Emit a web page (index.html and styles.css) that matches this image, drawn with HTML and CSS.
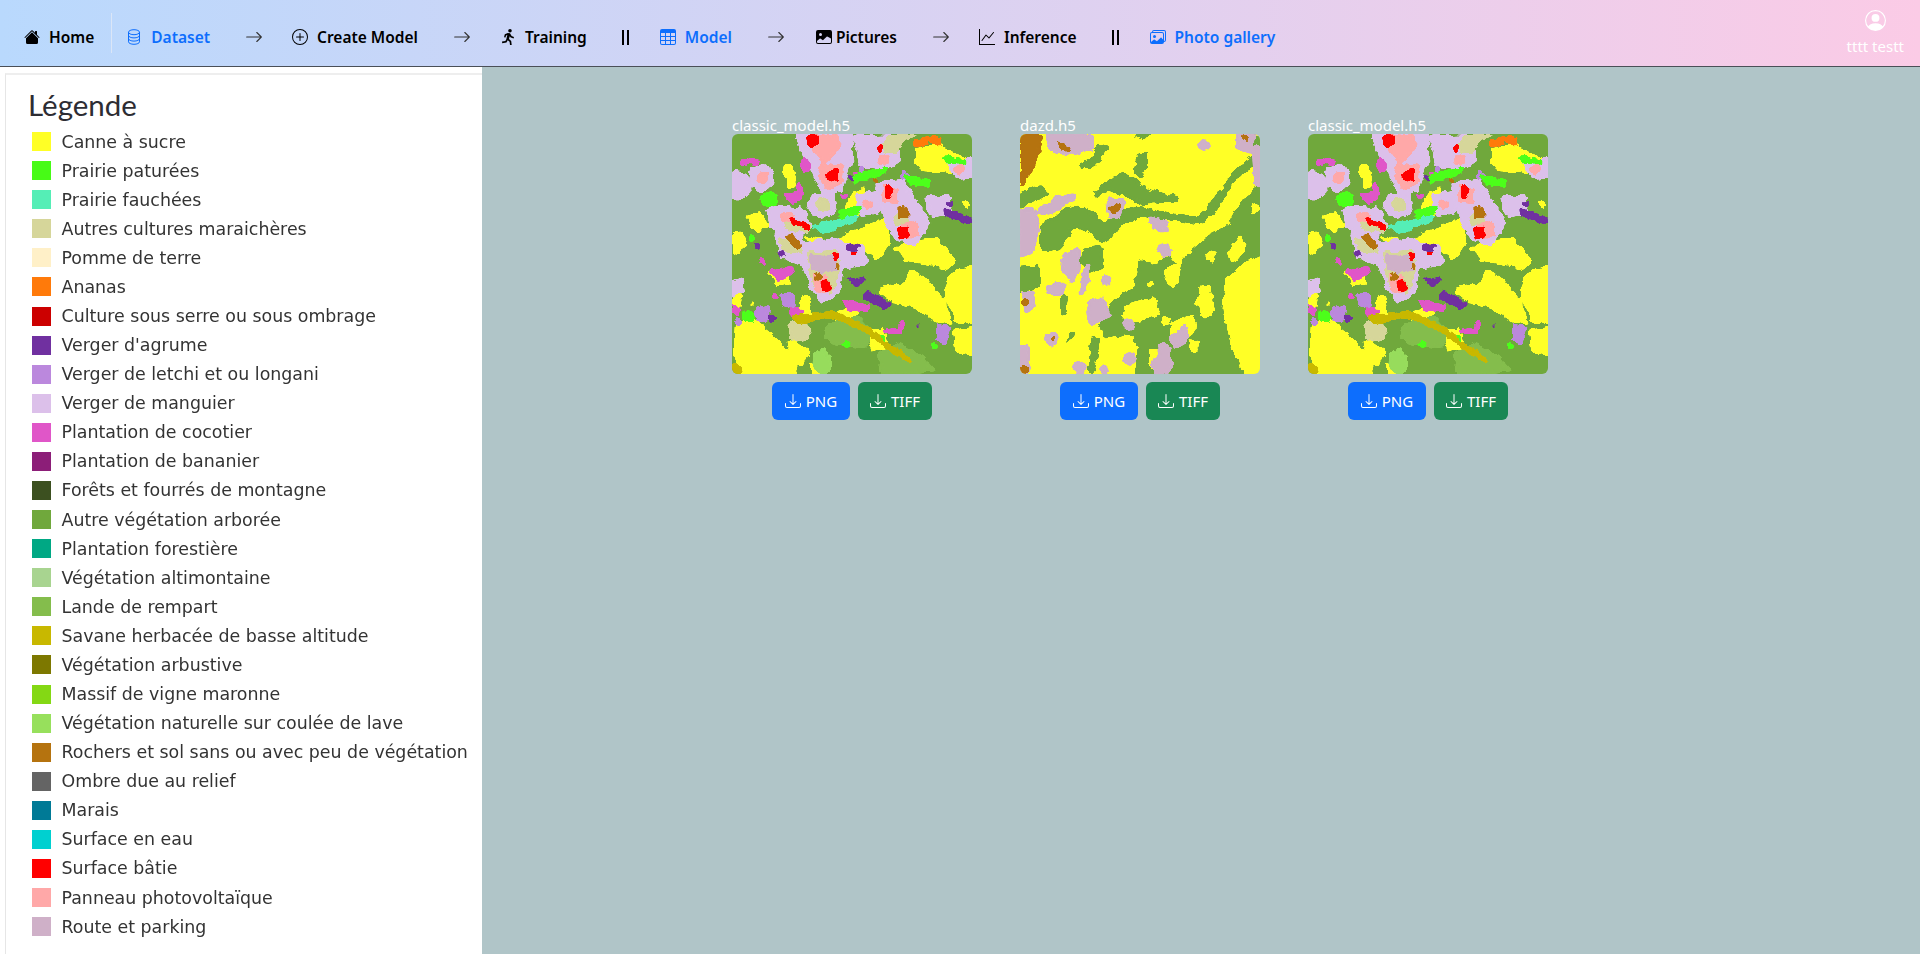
FILE: index.html
```html
<!DOCTYPE html>
<html lang="en">
<head>
    <meta charset="UTF-8">
    <meta name="viewport" content="width=device-width, initial-scale=1.0">
    <title>Photo gallery</title>
    <link rel="stylesheet" href="styles.css">
</head>
<body>
    <svg class="defs" width="0" height="0">
        <defs>
            <filter id="rough" x="-10%" y="-10%" width="120%" height="120%" color-interpolation-filters="sRGB">
                <feGaussianBlur in="SourceGraphic" stdDeviation="1.6" result="soft"/>
                <feColorMatrix in="soft" type="matrix" values="1 0 0 0 0  0 1 0 0 0  0 0 1 0 0  0 0 0 16 -6" result="blob"/>
                <feTurbulence type="fractalNoise" baseFrequency="0.12" numOctaves="2" seed="4" result="noise"/>
                <feDisplacementMap in="blob" in2="noise" scale="7" xChannelSelector="R" yChannelSelector="G"/>
            </filter>
            <symbol id="download" viewBox="0 0 16 16">
                <path d="M.5 9.9a.5.5 0 0 1 .5.5v2.5a1 1 0 0 0 1 1h12a1 1 0 0 0 1-1v-2.5a.5.5 0 0 1 1 0v2.5a2 2 0 0 1-2 2H2a2 2 0 0 1-2-2v-2.5a.5.5 0 0 1 .5-.5z"/>
                <path d="M7.646 11.854a.5.5 0 0 0 .708 0l3-3a.5.5 0 0 0-.708-.708L8.5 10.293V1.5a.5.5 0 0 0-1 0v8.793L5.354 8.146a.5.5 0 1 0-.708.708l3 3z"/>
            </symbol>
            <symbol id="arrow" viewBox="0 0 16 16">
                <path fill-rule="evenodd" d="M1 8a.5.5 0 0 1 .5-.5h11.793l-3.147-3.146a.5.5 0 0 1 .708-.708l4 4a.5.5 0 0 1 0 .708l-4 4a.5.5 0 0 1-.708-.708L13.293 8.5H1.5A.5.5 0 0 1 1 8z"/>
            </symbol>
            <symbol id="map-classic" viewBox="0 0 240 240">
                <rect width="240" height="240" fill="#70a83c"/>
                <g filter="url(#rough)" fill="#ffff26">
                    <path d="M183 15 L205 8 L222 20 L242 28 V42 L215 38 L190 37 L183 28Z"/>
                    <path d="M3 190 L20 183 L40 200 L62 222 L66 242 H8 L2 220Z"/>
                    <path d="M161 113 L190 106 L205 105 L225 125 L215 135 L195 130 L175 128Z"/>
                    <path d="M147 152 L170 150 L180 135 L195 145 L212 165 L220 190 L205 188 L185 175 L165 170 L147 160Z"/>
                    <path d="M218 140 L242 130 V190 L224 188 L212 160Z"/>
                    <path d="M68 102 L100 106 L128 94 L155 83 L158 108 L145 126 L130 114 L100 110 L80 108Z"/>
                    <path d="M221 196 L242 193 V222 L224 220Z"/>
                    <path d="M15 82 L28 78 L38 92 L24 98 L18 92Z"/>
                    <path d="M135 198 L152 194 L156 214 L140 218Z"/>
                    <path d="M78 226 L92 232 L90 242 H78Z"/>
                    <path d="M52 32 L60 30 L64 52 L55 54Z"/>
                    <path d="M0 100 L10 96 L14 112 L2 122Z"/>
                    <path d="M36 136 L55 140 L60 150 L46 152Z"/>
                    <path d="M68 165 L78 160 L80 182 L70 188Z"/>
                    <path d="M0 158 L10 160 L8 176 L0 172Z"/>
                    <path d="M118 62 L134 52 L125 85 L100 95 L112 78Z"/>
                    <path d="M100 178 L130 172 L120 192 L105 190Z"/>
                    <path d="M55 205 L78 215 L70 232 L60 225Z"/>
                    <circle cx="158" cy="6" r="4"/><circle cx="235" cy="70" r="4"/><circle cx="20" cy="170" r="2"/>
                </g>
                <g filter="url(#rough)" fill="#84bd4c">
                    <path d="M96 190 L125 182 L138 196 L135 214 L105 212 L92 205Z"/>
                    <path d="M145 220 L165 208 L190 222 L205 238 L150 242Z"/>
                </g>
                <path filter="url(#rough)" d="M82 218 L92 214 L102 230 L90 242 L80 234Z" fill="#97dc5c"/>
                <g filter="url(#rough)" fill="#dcc0ea" stroke="#dcc0ea" stroke-width="5" stroke-linejoin="round">
                    <path d="M66 0 L118 0 L118 25 L108 55 L92 60 L85 45 L75 30Z"/>
                    <path d="M125 4 L165 3 L165 28 L150 33 L130 32Z"/>
                    <path d="M21 36 L36 33 L40 50 L28 56 L21 50Z"/>
                    <path d="M0 41 L13 42 L16 58 L6 64 L0 62Z"/>
                    <path d="M80 64 L100 62 L102 78 L88 82 L78 76Z"/>
                    <path d="M126 62 L145 60 L146 78 L130 80Z"/>
                    <path d="M146 50 L170 48 L196 88 L182 110 L165 104 L155 85Z"/>
                    <path d="M195 64 L215 64 L216 79 L200 80Z"/>
                    <path d="M218 28 L240 28 V41 L224 42Z"/>
                    <path d="M38 74 L68 76 L78 92 L65 102 L40 92Z"/>
                    <path d="M45 100 L65 96 L70 112 L88 108 L108 106 L108 140 L105 158 L90 168 L80 150 L72 128 L50 122Z"/>
                    <path d="M110 113 L130 112 L132 128 L118 132 L110 128Z"/>
                    <path d="M0 150 L8 146 L10 156 L0 160Z"/>
                </g>
                <g filter="url(#rough)" fill="#d6d69a">
                    <path d="M50 82 L80 90 L76 100 L55 96Z"/>
                    <path d="M45 104 L66 108 L72 120 L52 118Z"/>
                    <path d="M75 118 L106 116 L108 135 L100 160 L80 150Z"/>
                    <path d="M83 66 L98 64 L98 76 L88 78Z"/>
                    <path d="M55 190 L75 182 L78 205 L60 208Z"/>
                    <path d="M160 82 L172 76 L178 88 L164 92Z"/>
                    <path d="M160 0 L188 0 L172 6 L165 20 L155 20 L150 12Z"/>
                </g>
                <g filter="url(#rough)" fill="#ffa8a8">
                    <path d="M80 0 L108 2 L106 18 L92 30 L82 18Z"/>
                    <path d="M90 30 L112 32 L110 50 L96 56 L86 44Z"/>
                    <circle cx="31" cy="44" r="6"/>
                    <path d="M150 52 L166 54 L166 70 L150 68Z"/>
                    <path d="M168 90 L185 86 L188 102 L170 106Z"/>
                    <path d="M46 80 L60 78 L64 88 L50 88Z"/>
                    <circle cx="136" cy="70" r="5"/>
                    <circle cx="151" cy="26" r="6"/>
                    <circle cx="228" cy="35" r="5"/>
                    <path d="M80 140 L96 142 L95 158 L85 160Z"/>
                </g>
                <path filter="url(#rough)" d="M78 120 L106 122 L106 136 L90 140 L78 135Z" fill="#cfb0c8"/>
                <g filter="url(#rough)" fill="#ff0000">
                    <path d="M73 2 L84 0 L86 10 L78 14Z"/>
                    <path d="M94 36 L106 34 L106 46 L96 48Z"/>
                    <path d="M56 82 L78 90 L78 96 L62 90Z"/>
                    <path d="M152 54 L160 50 L162 60 L154 66Z"/>
                    <path d="M165 94 L176 92 L178 104 L168 106Z"/>
                    <path d="M88 148 L98 146 L100 156 L92 158Z"/>
                    <circle cx="104" cy="122" r="3"/>
                    <circle cx="122" cy="120" r="2.5"/>
                    <circle cx="148" cy="14" r="3"/>
                </g>
                <g filter="url(#rough)" fill="#b5730f">
                    <path d="M52 102 L60 100 L70 112 L66 116Z"/>
                    <path d="M165 74 L174 72 L178 84 L166 84Z"/>
                    <path d="M84 138 L90 140 L88 148 L82 146Z"/>
                    <path d="M140 38 L146 38 L146 48 L142 48Z"/>
                    <path d="M102 130 L108 128 L106 138Z"/>
                </g>
                <g filter="url(#rough)" fill="#e056c8">
                    <path d="M8 24 L28 26 L26 32 L10 30Z"/>
                    <path d="M52 60 L68 58 L72 66 L58 70Z"/>
                    <path d="M38 136 L60 132 L62 140 L44 146Z"/>
                    <path d="M58 170 L72 176 L66 186 L58 180Z"/>
                    <path d="M110 166 L140 170 L135 178 L115 176Z"/>
                    <path d="M0 170 L8 174 L6 184 L0 180Z"/>
                    <path d="M150 195 L172 192 L168 200 L156 200Z"/>
                    <path d="M64 48 L72 52 L72 62 L65 58Z"/>
                    <path d="M70 20 L78 30 L74 40 L68 30Z"/>
                    <circle cx="112" cy="62" r="3"/><circle cx="30" cy="128" r="3"/><circle cx="125" cy="42" r="3"/>
                    <circle cx="170" cy="190" r="3"/><circle cx="210" cy="200" r="3"/><circle cx="44" cy="162" r="3"/>
                </g>
                <g filter="url(#rough)" fill="#bb88dd">
                    <path d="M48 160 L62 158 L64 172 L52 174Z"/>
                    <path d="M22 175 L38 172 L36 186 L25 188Z"/>
                    <path d="M205 190 L218 192 L214 212 L205 206Z"/>
                    <circle cx="172" cy="42" r="4"/><circle cx="6" cy="188" r="4"/><circle cx="130" cy="36" r="3"/>
                </g>
                <g filter="url(#rough)" fill="#7030a0">
                    <path d="M212 74 L240 84 L236 90 L214 82Z"/>
                    <path d="M116 144 L134 142 L124 154Z"/>
                    <path d="M135 156 L160 170 L152 175 L130 164Z"/>
                    <circle cx="50" cy="120" r="3.5"/>
                    <path d="M112 112 L128 108 L124 118 L114 116Z"/>
                    <circle cx="40" cy="184" r="4"/>
                    <circle cx="26" cy="112" r="3"/>
                    <circle cx="118" cy="44" r="3"/><circle cx="218" cy="70" r="3"/><circle cx="186" cy="192" r="2"/>
                </g>
                <g filter="url(#rough)" fill="#4cff1a">
                    <path d="M118 42 L158 32 L152 40 L122 50Z"/>
                    <path d="M105 78 L130 70 L128 78 L110 86Z"/>
                    <path d="M25 62 L42 58 L48 70 L30 72Z"/>
                    <path d="M10 176 L24 180 L20 190 L12 186Z"/>
                    <path d="M210 22 L236 26 L232 30 L214 28Z"/>
                    <path d="M170 40 L200 46 L195 54 L178 50Z"/>
                    <path d="M105 212 L118 206 L116 214Z"/>
                    <circle cx="150" cy="205" r="3"/><circle cx="202" cy="212" r="3"/><circle cx="20" cy="105" r="3"/>
                </g>
                <path filter="url(#rough)" d="M78 92 L125 80 L128 86 L90 100Z" fill="#55eeb6"/>
                <path filter="url(#rough)" d="M180 6 L205 2 L212 14 L198 8 L184 14Z" fill="#ff7a0a"/>
                <path filter="url(#rough)" d="M60 182 L100 176 L130 190 L180 226 L176 230 L130 196 L100 184 L66 190Z" fill="#c8b800"/>
                <path filter="url(#rough)" d="M0 228 L10 232 L8 242 H0Z" fill="#c8b800"/>
            </symbol>
            <symbol id="map-dazd" viewBox="0 0 240 240">
                <rect width="240" height="240" fill="#ffff26"/>
                <g filter="url(#rough)" fill="#70a83c">
                    <path d="M95 165 L115 152 L120 125 L135 130 L150 120 L157 135 L170 118 L190 100 L208 92 L222 65 L242 50 V120 L220 130 L205 145 L203 175 L210 210 L225 242 H115 L118 215 L110 200 L90 205 L78 195 L85 180Z"/>
                    <path d="M20 90 L35 83 L45 75 L62 72 L85 88 L105 75 L118 72 L140 78 L180 83 L185 75 L205 50 L225 27 L242 15 V27 L215 45 L195 78 L180 90 L140 85 L120 82 L100 92 L85 110 L70 100 L55 93 L40 115 L20 118Z"/>
                    <path d="M73 59 L90 44 L103 38 L130 56 L160 63 L157 69 L133 68 L123 71 L103 61 L87 56 L77 64Z"/>
                    <path d="M117 20 L128 18 L128 35 L120 44 L114 38Z"/>
                    <path d="M57 33 L72 22 L78 10 L90 12 L82 22 L75 32 L62 34Z"/>
                    <path d="M-2 133 L20 132 L20 152 L-2 160Z"/>
                    <path d="M-2 60 L20 50 L28 60 L10 70 L-2 74Z"/>
                    <path d="M62 114 L82 112 L84 134 L70 140 L60 128Z"/>
                    <path d="M36 225 L52 195 L55 198 L42 215Z"/>
                    <path d="M40 165 L48 160 L46 178 L40 180Z"/>
                    <path d="M110 0 L135 0 L125 6Z"/>
                    <path d="M228 0 L242 4 V22 L234 16Z"/>
                    <path d="M72 200 L80 205 L74 240 H68Z"/>
                </g>
                <g filter="url(#rough)" fill="#ffff26">
                    <path d="M105 172 L135 162 L140 180 L118 188 L102 184Z"/>
                    <path d="M180 152 L190 150 L194 180 L184 185 L176 170Z"/>
                    <path d="M150 190 L172 180 L178 195 L160 208 L150 205Z"/>
                    <path d="M208 118 L222 100 L226 115 L212 130Z"/>
                    <path d="M130 215 L142 215 L142 235 L130 235Z"/>
                    <path d="M170 205 L180 208 L176 220 L168 216Z"/>
                    <path d="M145 135 L162 126 L158 150 L150 155Z"/>
                    <path d="M186 118 L196 116 L194 128 L188 126Z"/>
                    <circle cx="112" cy="205" r="3"/><circle cx="130" cy="150" r="4"/><circle cx="146" cy="186" r="4"/>
                    <circle cx="225" cy="22" r="3"/><circle cx="236" cy="75" r="5"/>
                </g>
                <g filter="url(#rough)" fill="#cfb0c8" stroke="#cfb0c8" stroke-width="3" stroke-linejoin="round">
                    <path d="M0 76 L14 76 L18 95 L12 118 L0 122Z"/>
                    <path d="M18 78 L35 65 L55 62 L45 70 L30 80Z"/>
                    <path d="M28 0 L72 2 L72 15 L50 20 L32 16Z"/>
                    <path d="M88 66 L104 66 L100 82 L90 84Z"/>
                    <path d="M130 84 L145 88 L146 98 L135 94Z"/>
                    <path d="M50 120 L58 115 L58 134 L52 148 L42 132 L44 122Z"/>
                    <path d="M65 135 L70 130 L65 155 L60 160Z"/>
                    <path d="M70 168 L82 165 L90 182 L72 190 L68 180Z"/>
                    <path d="M0 212 L8 212 L8 225 L0 228Z"/>
                    <path d="M132 232 L142 210 L150 215 L150 236 L138 240Z"/>
                    <path d="M150 205 L165 192 L168 205 L155 212Z"/>
                    <path d="M218 0 L234 0 L230 18 L218 14Z"/>
                    <path d="M234 15 L240 12 V52 L235 50Z"/>
                    <circle cx="184" cy="11" r="4"/>
                    <path d="M4 160 L12 158 L14 172 L6 178Z"/>
                    <path d="M28 152 L46 150 L44 160 L30 160Z"/>
                    <circle cx="32" cy="205" r="6"/>
                    <circle cx="86" cy="146" r="4"/>
                    <circle cx="110" cy="224" r="5"/>
                    <circle cx="144" cy="116" r="5"/>
                    <circle cx="2" cy="232" r="7"/>
                    <circle cx="60" cy="234" r="5"/>
                    <circle cx="84" cy="236" r="4"/>
                    <circle cx="108" cy="190" r="4"/>
                </g>
                <g filter="url(#rough)" fill="#b5730f">
                    <path d="M0 0 H22 L18 25 L0 55Z"/>
                    <path d="M36 8 L52 12 L50 18 L40 16Z"/>
                    <circle cx="95" cy="75" r="5"/>
                    <circle cx="5" cy="168" r="4"/>
                    <circle cx="32" cy="205" r="2.5"/>
                    <circle cx="225" cy="4" r="3"/>
                    <circle cx="4" cy="235" r="4"/>
                </g>
            </symbol>
        </defs>
    </svg>

    <nav class="topbar">
        <a class="nav-link home-link">
            <svg class="bi" viewBox="0 0 16 16"><path d="M8.707 1.5a1 1 0 0 0-1.414 0L.646 8.146a.5.5 0 0 0 .708.708L8 2.207l6.646 6.647a.5.5 0 0 0 .708-.708L13 5.793V2.5a.5.5 0 0 0-.5-.5h-1a.5.5 0 0 0-.5.5v1.293L8.707 1.5Z"/><path d="m8 3.293 6 6V13.5a1.5 1.5 0 0 1-1.5 1.5h-9A1.5 1.5 0 0 1 2 13.5V9.293l6-6Z"/></svg>
            Home
        </a>
        <span class="nav-sep"></span>
        <a class="nav-link active">
            <svg class="bi bi-line" viewBox="0 0 16 16"><ellipse cx="8" cy="3.2" rx="5.5" ry="2.5"/><path d="M2.5 3.2v9.6c0 1.4 2.5 2.5 5.5 2.5s5.5-1.1 5.5-2.5V3.2M2.5 6.4c0 1.4 2.5 2.5 5.5 2.5s5.5-1.1 5.5-2.5M2.5 9.6c0 1.4 2.5 2.5 5.5 2.5s5.5-1.1 5.5-2.5"/></svg>
            Dataset
        </a>
        <svg class="arrow"><use href="#arrow"/></svg>
        <a class="nav-link">
            <svg class="bi" viewBox="0 0 16 16"><path d="M8 15A7 7 0 1 1 8 1a7 7 0 0 1 0 14zm0 1A8 8 0 1 0 8 0a8 8 0 0 0 0 16z"/><path d="M8 4a.5.5 0 0 1 .5.5v3h3a.5.5 0 0 1 0 1h-3v3a.5.5 0 0 1-1 0v-3h-3a.5.5 0 0 1 0-1h3v-3A.5.5 0 0 1 8 4z"/></svg>
            Create Model
        </a>
        <svg class="arrow"><use href="#arrow"/></svg>
        <a class="nav-link">
            <svg class="bi" viewBox="0 0 16 16"><circle cx="10" cy="1.8" r="1.8"/><path d="M7.8 4 4.800 5.200 4 8.200l1.500.4.6-2.100 1.200-.5-1 4.200-.9 1.900-3.400.5.2 1.600 4.300-.7 1.200-2.200 1.900 1.500.4 3.200h1.700l-.5-4.100-2.200-2 .7-2.700 1 1.300 2.900.9.4-1.500-2.400-.8L10 4.200z"/></svg>
            Training
        </a>
        <span class="pause"></span>
        <a class="nav-link active">
            <svg class="bi" viewBox="0 0 16 16"><path d="M0 2a2 2 0 0 1 2-2h12a2 2 0 0 1 2 2v12a2 2 0 0 1-2 2H2a2 2 0 0 1-2-2V2zm15 2h-4v3h4V4zm0 4h-4v3h4V8zm0 4h-4v3h3a1 1 0 0 0 1-1v-2zm-5 3v-3H6v3h4zm-5 0v-3H1v2a1 1 0 0 0 1 1h3zm-4-4h4V8H1v3zm0-4h4V4H1v3zm5-3v3h4V4H6zm4 4H6v3h4V8z"/></svg>
            Model
        </a>
        <svg class="arrow"><use href="#arrow"/></svg>
        <a class="nav-link tight">
            <svg class="bi" viewBox="0 0 16 16"><path d="M.002 3a2 2 0 0 1 2-2h12a2 2 0 0 1 2 2v10a2 2 0 0 1-2 2h-12a2 2 0 0 1-2-2V3zm1 9v1a1 1 0 0 0 1 1h12a1 1 0 0 0 1-1V9.5l-3.777-1.947a.5.5 0 0 0-.577.093l-3.71 3.71-2.66-1.772a.5.5 0 0 0-.63.062L1.002 12zm5-6.5a1.5 1.5 0 1 0-3 0 1.5 1.5 0 0 0 3 0z"/></svg>
            Pictures
        </a>
        <svg class="arrow"><use href="#arrow"/></svg>
        <a class="nav-link">
            <svg class="bi" viewBox="0 0 16 16"><path fill-rule="evenodd" d="M0 0h1v15h15v1H0V0Zm14.817 3.113a.5.5 0 0 1 .07.704l-4.5 5.5a.5.5 0 0 1-.74.037L7.06 6.767l-3.656 5.027a.5.5 0 0 1-.808-.588l4-5.5a.5.5 0 0 1 .758-.06l2.609 2.61 4.15-5.073a.5.5 0 0 1 .704-.07Z"/></svg>
            Inference
        </a>
        <span class="pause"></span>
        <a class="nav-link active">
            <svg class="bi" viewBox="0 0 16 16"><path d="M4.502 9a1.5 1.5 0 1 0 0-3 1.5 1.5 0 0 0 0 3z"/><path d="M14.002 13a2 2 0 0 1-2 2h-10a2 2 0 0 1-2-2V5A2 2 0 0 1 2 3a2 2 0 0 1 2-2h10a2 2 0 0 1 2 2v8a2 2 0 0 1-1.998 2zM14 2H4a1 1 0 0 0-1 1h9.002a2 2 0 0 1 2 2v7A1 1 0 0 0 15 11V3a1 1 0 0 0-1-1zM2.002 4a1 1 0 0 0-1 1v8l2.646-2.354a.5.5 0 0 1 .63-.062l2.66 1.773 3.71-3.71a.5.5 0 0 1 .577-.094l1.777 1.947V5a1 1 0 0 0-1-1h-10z"/></svg>
            Photo gallery
        </a>
        <div class="user">
            <svg class="user-icon" viewBox="0 0 16 16"><path d="M11 6a3 3 0 1 1-6 0 3 3 0 0 1 6 0z"/><path fill-rule="evenodd" d="M0 8a8 8 0 1 1 16 0A8 8 0 0 1 0 8zm8-7a7 7 0 0 0-5.468 11.37C3.242 11.226 4.805 10 8 10s4.757 1.225 5.468 2.37A7 7 0 0 0 8 1z"/></svg>
            <span>tttt testt</span>
        </div>
    </nav>

    <div class="page">
        <aside class="sidebar">
            <div class="legend">
                <h2>Légende</h2>
                <ul>
                    <li><i class="sw c1"></i>Canne à sucre</li>
                    <li><i class="sw c2"></i>Prairie paturées</li>
                    <li><i class="sw c3"></i>Prairie fauchées</li>
                    <li><i class="sw c4"></i>Autres cultures maraichères</li>
                    <li><i class="sw c5"></i>Pomme de terre</li>
                    <li><i class="sw c6"></i>Ananas</li>
                    <li><i class="sw c7"></i>Culture sous serre ou sous ombrage</li>
                    <li><i class="sw c8"></i>Verger d'agrume</li>
                    <li><i class="sw c9"></i>Verger de letchi et ou longani</li>
                    <li><i class="sw c10"></i>Verger de manguier</li>
                    <li><i class="sw c11"></i>Plantation de cocotier</li>
                    <li><i class="sw c12"></i>Plantation de bananier</li>
                    <li><i class="sw c13"></i>Forêts et fourrés de montagne</li>
                    <li><i class="sw c14"></i>Autre végétation arborée</li>
                    <li><i class="sw c15"></i>Plantation forestière</li>
                    <li><i class="sw c16"></i>Végétation altimontaine</li>
                    <li><i class="sw c17"></i>Lande de rempart</li>
                    <li><i class="sw c18"></i>Savane herbacée de basse altitude</li>
                    <li><i class="sw c19"></i>Végétation arbustive</li>
                    <li><i class="sw c20"></i>Massif de vigne maronne</li>
                    <li><i class="sw c21"></i>Végétation naturelle sur coulée de lave</li>
                    <li><i class="sw c22"></i>Rochers et sol sans ou avec peu de végétation</li>
                    <li><i class="sw c23"></i>Ombre due au relief</li>
                    <li><i class="sw c24"></i>Marais</li>
                    <li><i class="sw c25"></i>Surface en eau</li>
                    <li><i class="sw c26"></i>Surface bâtie</li>
                    <li><i class="sw c27"></i>Panneau photovoltaïque</li>
                    <li><i class="sw c28"></i>Route et parking</li>
                </ul>
            </div>
        </aside>

        <main class="gallery">
            <div class="card">
                <div class="card-name">classic_model.h5</div>
                <svg class="map"><use href="#map-classic"/></svg>
                <div class="card-actions">
                    <button class="btn btn-png"><svg class="dl"><use href="#download"/></svg>PNG</button>
                    <button class="btn btn-tiff"><svg class="dl"><use href="#download"/></svg>TIFF</button>
                </div>
            </div>
            <div class="card">
                <div class="card-name">dazd.h5</div>
                <svg class="map"><use href="#map-dazd"/></svg>
                <div class="card-actions">
                    <button class="btn btn-png"><svg class="dl"><use href="#download"/></svg>PNG</button>
                    <button class="btn btn-tiff"><svg class="dl"><use href="#download"/></svg>TIFF</button>
                </div>
            </div>
            <div class="card">
                <div class="card-name">classic_model.h5</div>
                <svg class="map"><use href="#map-classic"/></svg>
                <div class="card-actions">
                    <button class="btn btn-png"><svg class="dl"><use href="#download"/></svg>PNG</button>
                    <button class="btn btn-tiff"><svg class="dl"><use href="#download"/></svg>TIFF</button>
                </div>
            </div>
        </main>
    </div>
</body>
</html>
```

FILE: styles.css
```css
* {
    box-sizing: border-box;
}
html, body {
    height: 100%;
}
body {
    margin: 0;
    overflow: hidden;
    background-color: #b0c5c8;
    font-family: "Noto Sans", "Open Sans", Arial, sans-serif;
}
.defs {
    position: absolute;
}

.topbar {
    display: flex;
    align-items: center;
    height: 67px;
    padding: 8px 16px 0 24px;
    border-bottom: 1px solid #4a4f57;
    background: linear-gradient(90deg, #b9d9fd 0%, #fbcbe6 100%);
}
.nav-link {
    display: flex;
    align-items: center;
    gap: 9px;
    font-size: 15.5px;
    font-weight: 600;
    color: #000;
    white-space: nowrap;
}
.nav-link.tight {
    gap: 4px;
    margin-left: 2px;
}
.nav-link.active {
    color: #0d6efd;
}
.bi {
    width: 16px;
    height: 16px;
    fill: currentColor;
}
.bi-line {
    fill: none;
    stroke: currentColor;
}
.nav-sep {
    width: 1px;
    height: 40px;
    margin: -8px 14px 0 17px;
    background-color: #dbe6f7;
}
.arrow {
    width: 18px;
    height: 18px;
    margin: 0 29px 0 35px;
    fill: #333;
}
.pause {
    width: 7px;
    height: 15px;
    margin: 0 31px 0 35px;
    border-left: 2px solid #000;
    border-right: 2px solid #000;
}
.user {
    display: flex;
    flex-direction: column;
    align-items: center;
    gap: 5px;
    margin: -8px 0 0 auto;
    font-size: 15px;
    color: #fff;
}
.user-icon {
    width: 21px;
    height: 21px;
    fill: #fff;
}

.page {
    display: flex;
    height: calc(100% - 67px);
}
.sidebar {
    width: 482px;
    padding: 6px 0 0 5px;
    background-color: #fff;
}
.legend {
    height: 100%;
    border-left: 1px solid #e6e6e6;
    border-top: 2px solid #eee;
}
.legend h2 {
    margin: 0;
    height: 52px;
    padding: 11px 0 0 22px;
    font-family: Lato, sans-serif;
    font-size: 29.5px;
    font-weight: 400;
    line-height: 38px;
    color: #2d2d33;
}
.legend ul {
    margin: 0;
    padding: 0 0 0 26px;
    list-style: none;
    filter: blur(0.35px);
}
.legend li {
    display: flex;
    align-items: center;
    gap: 10.5px;
    height: 29.08px;
    font-family: "DejaVu Sans", sans-serif;
    font-size: 17.4px;
    color: #333;
    white-space: nowrap;
}
.sw {
    flex: none;
    width: 19px;
    height: 19px;
}
.c1 { background: #ffff26; }
.c2 { background: #47fb16; }
.c3 { background: #55eeb6; }
.c4 { background: #d6d69a; }
.c5 { background: #fff0c8; }
.c6 { background: #ff7a0a; }
.c7 { background: #cc0000; }
.c8 { background: #7030a0; }
.c9 { background: #bb88dd; }
.c10 { background: #dcc0ea; }
.c11 { background: #e056c8; }
.c12 { background: #8c1e78; }
.c13 { background: #3c5020; }
.c14 { background: #70a83c; }
.c15 { background: #00a884; }
.c16 { background: #a8d490; }
.c17 { background: #84bd4c; }
.c18 { background: #c8b800; }
.c19 { background: #7d7800; }
.c20 { background: #84d814; }
.c21 { background: #97e05c; }
.c22 { background: #b5730f; }
.c23 { background: #646464; }
.c24 { background: #007a96; }
.c25 { background: #00d0d0; }
.c26 { background: #ff0000; }
.c27 { background: #ffa8a8; }
.c28 { background: #cfb0c8; }

.gallery {
    display: flex;
    align-items: flex-start;
    gap: 48px;
    flex: 1;
    padding: 50px 0 0 250px;
}
.card {
    width: 240px;
}
.card-name {
    height: 17px;
    font-size: 15px;
    line-height: 16px;
    color: #fff;
}
.map {
    display: block;
    width: 240px;
    height: 240px;
    border-radius: 6px;
    overflow: hidden;
}
.card-actions {
    display: flex;
    justify-content: center;
    gap: 8px;
    margin-top: 8px;
}
.btn {
    display: flex;
    align-items: center;
    justify-content: center;
    gap: 5px;
    height: 38px;
    padding: 0;
    border: none;
    border-radius: 6px;
    font-family: inherit;
    font-size: 15px;
    color: #fff;
}
.btn-png {
    width: 78px;
    background-color: #0d6efd;
}
.btn-tiff {
    width: 74px;
    background-color: #198754;
}
.dl {
    width: 16px;
    height: 16px;
    fill: #fff;
}
```
